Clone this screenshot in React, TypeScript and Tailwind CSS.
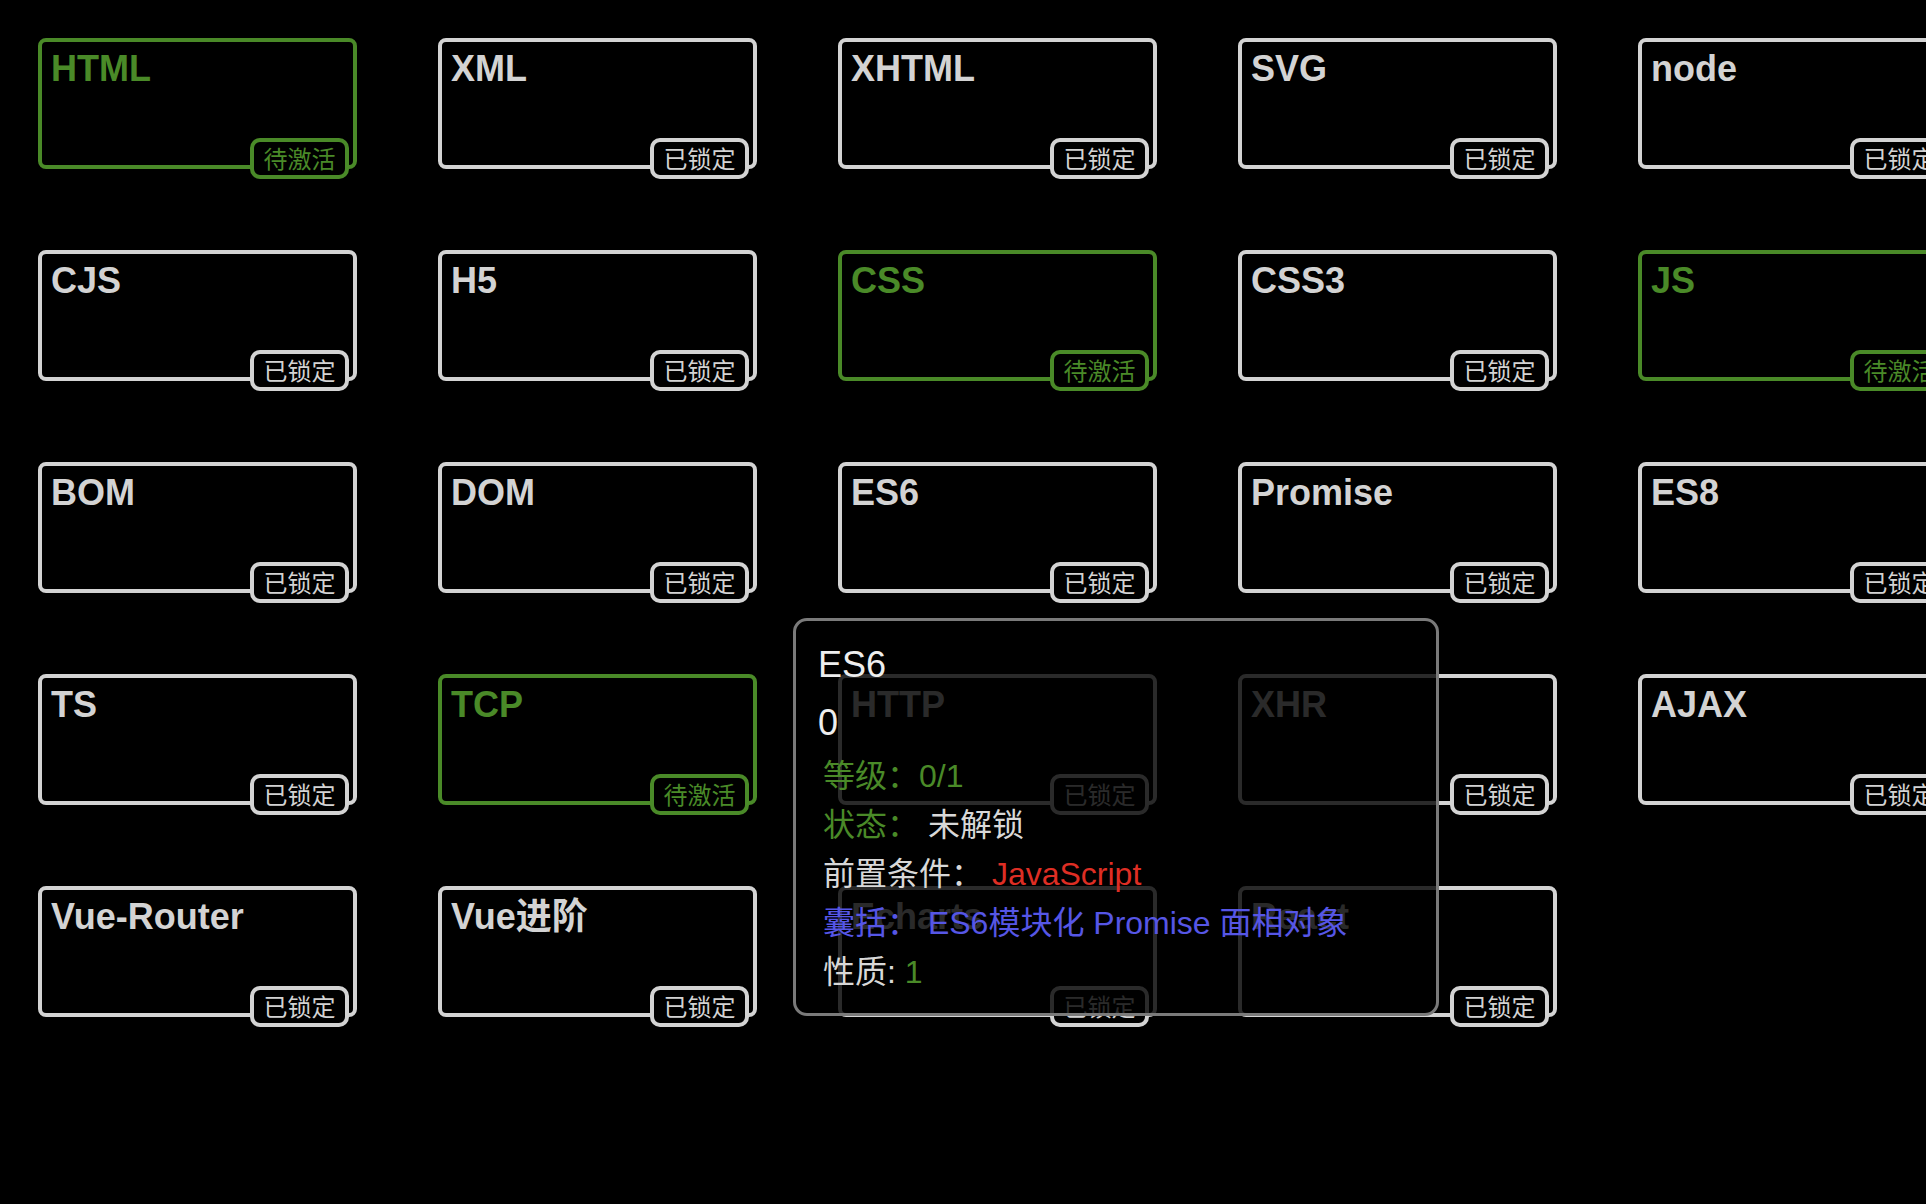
import React from "react";

type Item = { name: string; active?: boolean };

const rows: Item[][] = [
  [{ name: "HTML", active: true }, { name: "XML" }, { name: "XHTML" }, { name: "SVG" }, { name: "node" }],
  [{ name: "CJS" }, { name: "H5" }, { name: "CSS", active: true }, { name: "CSS3" }, { name: "JS", active: true }],
  [{ name: "BOM" }, { name: "DOM" }, { name: "ES6" }, { name: "Promise" }, { name: "ES8" }],
  [{ name: "TS" }, { name: "TCP", active: true }, { name: "HTTP" }, { name: "XHR" }, { name: "AJAX" }],
  [{ name: "Vue-Router" }, { name: "Vue进阶" }, { name: "Echarts" }, { name: "React" }],
];

const items = rows.flat();

function Card({ item }: { item: Item }) {
  const active = !!item.active;
  return (
    <div
      className={
        "relative h-[131px] w-[319px] rounded-[8px] border-4 pl-[9px] pt-[7px] " +
        (active ? "border-[#4a8a28] text-[#4a8a28]" : "border-[#d3d3d3] text-[#d3d3d3]")
      }
    >
      <div className="text-[36px] font-bold leading-[40px] [font-family:'Liberation_Sans','Noto_Sans_CJK_SC',sans-serif]">
        {item.name}
      </div>
      <div
        className={
          "absolute bottom-[-14px] right-[4px] flex h-[41px] w-[99px] items-center justify-center rounded-[10px] border-4 bg-black text-[24px] leading-none [font-family:'Noto_Sans_CJK_SC',sans-serif] " +
          (active ? "border-[#4a8a28] text-[#4a8a28]" : "border-[#d3d3d3] text-[#d3d3d3]")
        }
      >
        <span className="-mt-[2px]">{active ? "待激活" : "已锁定"}</span>
      </div>
    </div>
  );
}

export default function App() {
  return (
    <div className="relative h-[1204px] w-[1926px] overflow-hidden bg-black">
      <div className="grid w-max grid-cols-[repeat(5,319px)] gap-x-[81px] gap-y-[81px] pl-[38px] pt-[38px]">
        {items.map((it) => (
          <Card key={it.name} item={it} />
        ))}
      </div>

      <div className="absolute left-[793px] top-[618px] h-[398px] w-[646px] rounded-[14px] border-[3px] border-[#7a7a7a] bg-black/80 pl-[22px] pt-[15px] [font-family:'Liberation_Sans','Noto_Sans_CJK_SC',sans-serif]">
        <div className="text-[36px] leading-[58px] text-[#eeeeee]">ES6</div>
        <div className="text-[36px] leading-[58px] text-[#eeeeee]">0</div>
        <div className="pl-[5px] text-[32px] leading-[49px]">
          <div className="text-[#4a8a28]">等级：0/1</div>
          <div>
            <span className="text-[#4a8a28]">状态：</span>
            <span className="text-[#d8d8d8]"> 未解锁</span>
          </div>
          <div>
            <span className="text-[#d8d8d8]">前置条件：</span>
            <span className="text-[#de2e24]"> JavaScript</span>
          </div>
          <div className="text-[#5656e6]">
            <span>囊括：</span>
            <span> ES6模块化 Promise 面相对象</span>
          </div>
          <div>
            <span className="text-[#d8d8d8]">性质:</span>
            <span className="text-[#4a8a28]"> 1</span>
          </div>
        </div>
      </div>
    </div>
  );
}
